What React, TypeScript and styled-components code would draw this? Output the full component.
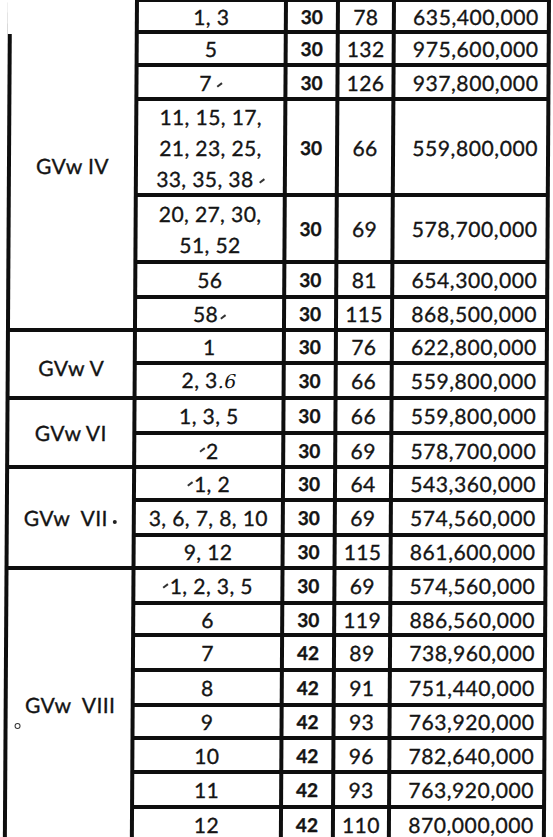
import React from 'react';
import styled, { createGlobalStyle } from 'styled-components';

const GlobalStyle = createGlobalStyle`
  html, body {
    margin: 0;
    background: #ffffff;
  }
  body {
    font-family: 'Lato', 'Liberation Sans', sans-serif;
    color: #141414;
    overflow: hidden;
  }
`;

type Row = { no: React.ReactNode; width: string; len: string; cost: string; h: number };
type Group = { label?: React.ReactNode; cut?: boolean; lift?: number; rows: Row[] };

// scanned sheet is slightly skewed, lines drift left towards the bottom
const Sheet = styled.div<{ $rows: string }>`
  display: grid;
  grid-template-columns: 123px 145px 48px 52px 151px;
  grid-template-rows: ${(p) => p.$rows};
  gap: 4px;
  padding: 4px;
  width: max-content;
  margin: -2px 0 0 8px;
  background: #0e0e0e;
  transform: skewX(-0.35deg);
  transform-origin: 0 0;
`;

const Cell = styled.div`
  background: #ffffff;
  display: flex;
  align-items: center;
  justify-content: center;
  text-align: center;
  font-size: 21px;
  line-height: 31px;
  letter-spacing: 0.4px;
  white-space: pre;
  -webkit-text-stroke: 0.35px #141414;
`;

const GroupCell = styled(Cell)<{ $span: number; $lift?: number; $cut?: boolean }>`
  grid-column: 1;
  grid-row: span ${(p) => p.$span};
  padding-bottom: ${(p) => Math.max(p.$lift ?? 0, 0)}px;
  padding-top: ${(p) => Math.max(-(p.$lift ?? 0), 0)}px;
  ${(p) => (p.$cut ? 'margin: -4px 0 -4px -4px;' : '')}
`;

const NoCell = styled(Cell)`
  grid-column: 2;
  flex-direction: column;
`;

const WidthCell = styled(Cell)`
  grid-column: 3;
  font-size: 19px;
  font-weight: 700;
  letter-spacing: 0;
`;

const LenCell = styled(Cell)`
  grid-column: 4;
`;

const CostCell = styled(Cell)`
  grid-column: 5;
  justify-content: flex-end;
  padding-right: 8px;
  letter-spacing: 0.6px;
`;

const Tick = styled.span<{ $before?: boolean }>`
  display: inline-block;
  width: 6px;
  height: 1.5px;
  background: #333;
  transform: rotate(-38deg);
  vertical-align: middle;
  margin: ${(p) => (p.$before ? '0 1px 6px 0' : '0 0 0 5px')};
`;

const Hand = styled.span`
  font-family: 'DejaVu Serif', serif;
  font-style: italic;
  font-size: 19px;
  -webkit-text-stroke: 0;
`;

const Dot = styled.span<{ $ring?: boolean }>`
  display: inline-block;
  width: 4px;
  height: 4px;
  border-radius: 50%;
  background: ${(p) => (p.$ring ? '#fff' : '#222')};
  border: ${(p) => (p.$ring ? '1.5px solid #333' : 'none')};
  position: relative;
  top: ${(p) => (p.$ring ? '16px' : '-2px')};
  margin: ${(p) => (p.$ring ? '0 4px 0 -8px' : '0 0 0 5px')};
`;

const groups: Group[] = [
  {
    cut: true,
    rows: [{ no: '1, 3', width: '30', len: '78', cost: '635,400,000', h: 28 }],
  },
  {
    label: 'GVw IV',
    lift: 32,
    rows: [
      { no: '5', width: '30', len: '132', cost: '975,600,000', h: 29 },
      { no: <span>7<Tick /></span>, width: '30', len: '126', cost: '937,800,000', h: 30 },
      {
        no: (
          <>
            <span>11, 15, 17,</span>
            <span>21, 23, 25,</span>
            <span>
              33, 35, 38<Tick />
            </span>
          </>
        ),
        width: '30',
        len: '66',
        cost: '559,800,000',
        h: 92,
      },
      {
        no: (
          <>
            <span>20, 27, 30,</span>
            <span>51, 52</span>
          </>
        ),
        width: '30',
        len: '69',
        cost: '578,700,000',
        h: 63,
      },
      { no: '56', width: '30', len: '81', cost: '654,300,000', h: 31 },
      { no: <span>58<Tick style={{ marginLeft: 2 }} /></span>, width: '30', len: '115', cost: '868,500,000', h: 29 },
    ],
  },
  {
    label: 'GVw V',
    lift: -7,
    rows: [
      { no: '1', width: '30', len: '76', cost: '622,800,000', h: 29 },
      { no: <span>2, 3<Hand>.6</Hand></span>, width: '30', len: '66', cost: '559,800,000', h: 31 },
    ],
  },
  {
    label: 'GVw VI',
    rows: [
      { no: '1, 3, 5', width: '30', len: '66', cost: '559,800,000', h: 31 },
      { no: <span><Tick $before />2</span>, width: '30', len: '69', cost: '578,700,000', h: 30 },
    ],
  },
  {
    label: (
      <span>
        {'GVw  VII'}
        <Dot />
      </span>
    ),
    rows: [
      { no: <span><Tick $before />1, 2</span>, width: '30', len: '64', cost: '543,360,000', h: 29 },
      { no: '3, 6, 7, 8, 10', width: '30', len: '69', cost: '574,560,000', h: 31 },
      { no: '9, 12', width: '30', len: '115', cost: '861,600,000', h: 29 },
    ],
  },
  {
    label: (
      <span>
        <Dot $ring />
        {'GVw  VIII'}
      </span>
    ),
    rows: [
      { no: <span><Tick $before />1, 2, 3, 5</span>, width: '30', len: '69', cost: '574,560,000', h: 31 },
      { no: '6', width: '30', len: '119', cost: '886,560,000', h: 28 },
      { no: '7', width: '42', len: '89', cost: '738,960,000', h: 31 },
      { no: '8', width: '42', len: '91', cost: '751,440,000', h: 31 },
      { no: '9', width: '42', len: '93', cost: '763,920,000', h: 29 },
      { no: '10', width: '42', len: '96', cost: '782,640,000', h: 30 },
      { no: '11', width: '42', len: '93', cost: '763,920,000', h: 31 },
      { no: '12', width: '42', len: '110', cost: '870,000,000', h: 30 },
    ],
  },
];

export default function App() {
  const rowTemplate = groups
    .flatMap((g) => g.rows)
    .map((r) => `${r.h}px`)
    .join(' ');

  return (
    <>
      <GlobalStyle />
      <Sheet $rows={rowTemplate}>
        {groups.map((g, gi) => (
          <React.Fragment key={gi}>
            <GroupCell $span={g.rows.length} $lift={g.lift} $cut={g.cut}>
              {g.label}
            </GroupCell>
            {g.rows.map((r, ri) => (
              <React.Fragment key={ri}>
                <NoCell>{r.no}</NoCell>
                <WidthCell>{r.width}</WidthCell>
                <LenCell>{r.len}</LenCell>
                <CostCell>{r.cost}</CostCell>
              </React.Fragment>
            ))}
          </React.Fragment>
        ))}
      </Sheet>
    </>
  );
}
